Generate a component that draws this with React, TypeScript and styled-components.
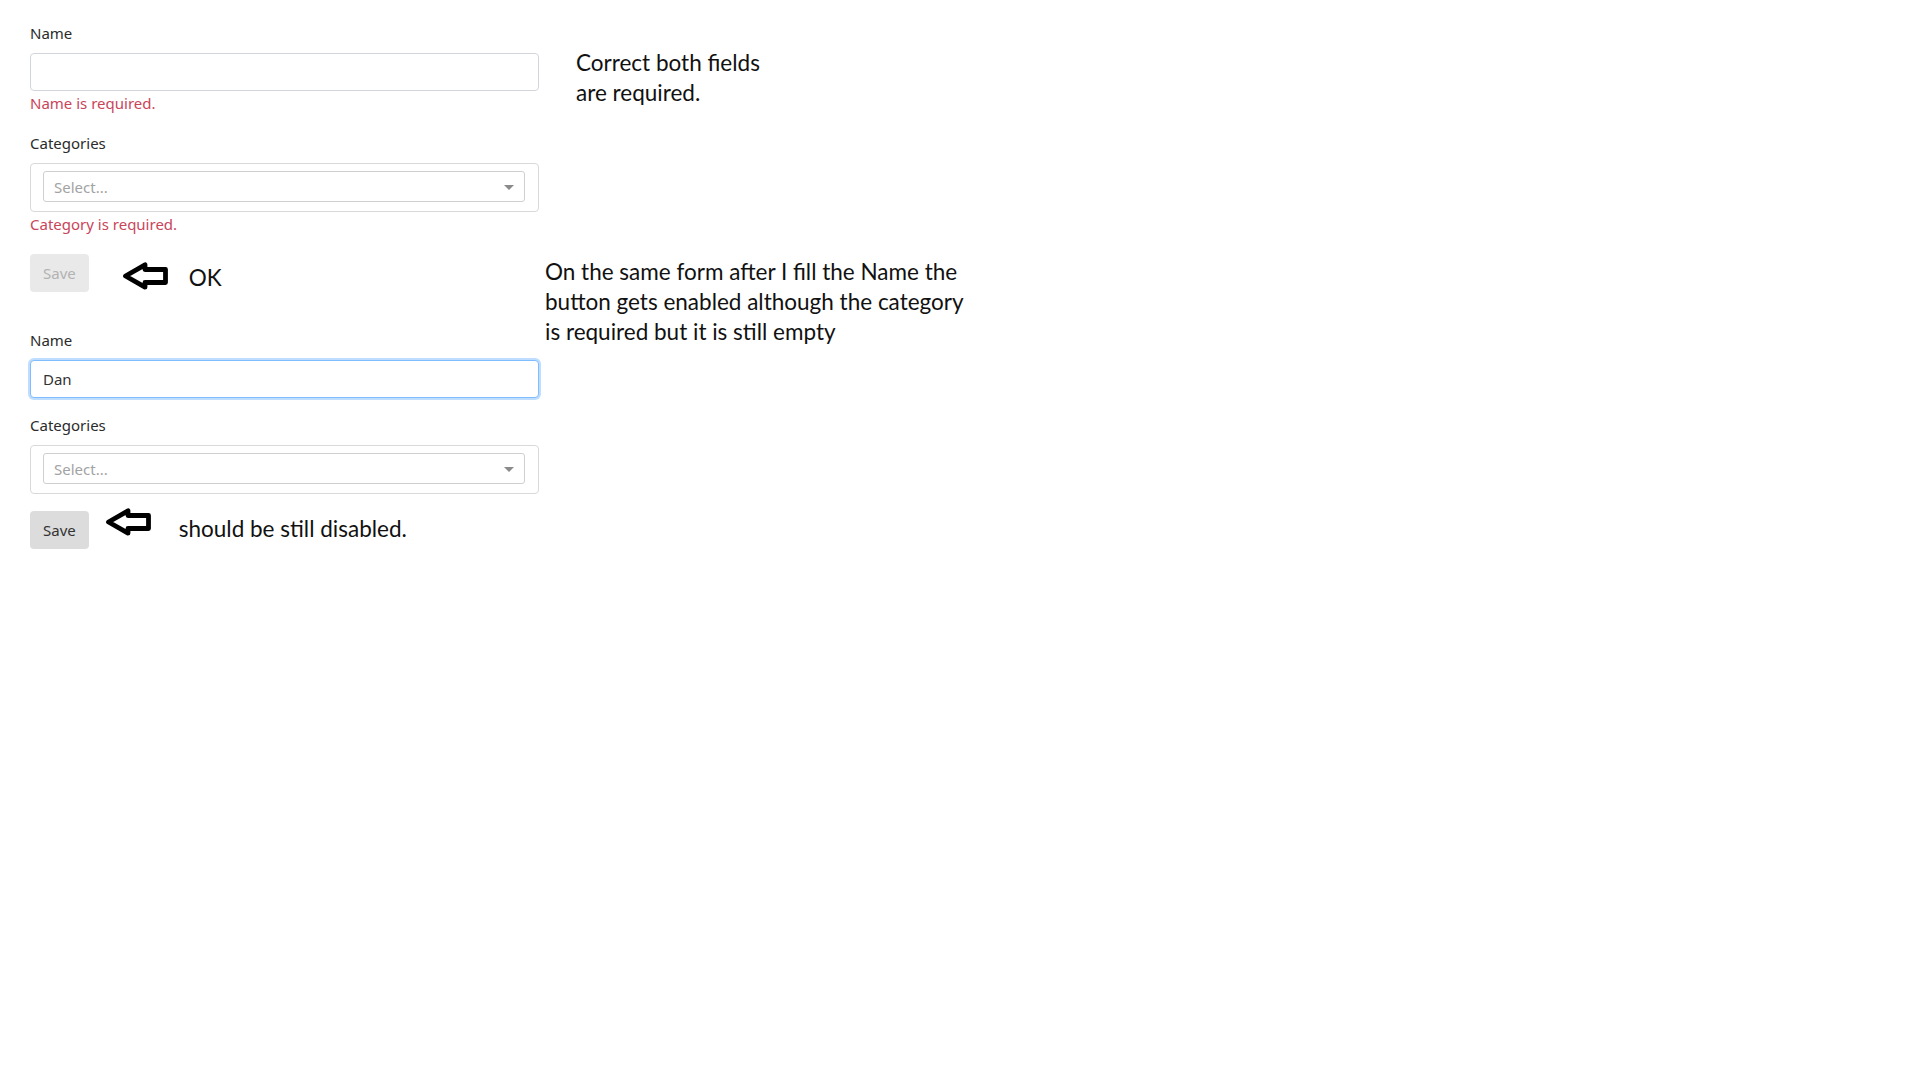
import styled, { createGlobalStyle } from "styled-components";

const GlobalStyle = createGlobalStyle`
  html, body {
    margin: 0;
    padding: 0;
    background: #ffffff;
  }
  body {
    font-family: "Noto Sans", "Open Sans", sans-serif;
    color: #212529;
  }
  * {
    box-sizing: border-box;
  }
`;

const Page = styled.div`
  width: 1920px;
  height: 1080px;
  padding: 21px 0 0 30px;
  display: grid;
  grid-template-columns: 509px auto;
  column-gap: 6px;
  align-items: start;
`;

const FormColumn = styled.div`
  display: flex;
  flex-direction: column;
`;

const Form = styled.form<{ $top?: number }>`
  display: flex;
  flex-direction: column;
  margin-top: ${(p) => p.$top ?? 0}px;
`;

const Group = styled.div<{ $space?: number }>`
  display: flex;
  flex-direction: column;
  margin-bottom: ${(p) => p.$space ?? 16}px;
`;

const Label = styled.label`
  font-size: 15px;
  line-height: 24px;
  margin-bottom: 8px;
  color: #2b2b2b;
`;

const TextInput = styled.input<{ $focused?: boolean }>`
  height: 38px;
  width: 100%;
  padding: 0 12px;
  font-family: "Noto Sans", "Open Sans", sans-serif;
  font-size: 15px;
  color: #333;
  background: #fff;
  border: 1px solid ${(p) => (p.$focused ? "#80bdff" : "#d2d6da")};
  border-radius: 4px;
  outline: none;
  box-shadow: ${(p) =>
    p.$focused ? "0 0 0 2px rgba(0, 123, 255, 0.25)" : "none"};
`;

const Error = styled.div`
  margin: 2px 0 2px;
  font-size: 15px;
  line-height: 20px;
  color: #c9455a;
`;

const SelectFrame = styled.div`
  height: 49px;
  padding: 7px 13px 9px 12px;
  border: 1px solid #d9d9d9;
  border-radius: 4px;
  display: flex;
`;

const SelectBox = styled.div`
  flex: 1;
  display: flex;
  align-items: center;
  justify-content: space-between;
  padding: 0 10px 0 10px;
  border: 1px solid #cfcfcf;
  border-radius: 3px;
  font-size: 15px;
  color: #a3a3a3;
`;

const Caret = styled.span`
  width: 0;
  height: 0;
  border-left: 5px solid transparent;
  border-right: 5px solid transparent;
  border-top: 5px solid #8a8a8a;
  margin-top: 2px;
`;

const ButtonRow = styled.div<{ $top?: number }>`
  display: flex;
  align-items: center;
  height: 38px;
  margin-top: ${(p) => p.$top ?? 0}px;
`;

const SaveButton = styled.button`
  height: 38px;
  padding: 0 13px;
  font-family: "Noto Sans", "Open Sans", sans-serif;
  font-size: 15px;
  border: none;
  border-radius: 4px;
  background: #dcdcdc;
  color: #333;

  &:disabled {
    background: #e9e9e9;
    color: #b2b2b2;
  }
`;

const ArrowMark = styled.svg<{ $gap: number; $shift: number }>`
  width: 46px;
  height: 28px;
  margin-left: ${(p) => p.$gap}px;
  transform: translateY(${(p) => p.$shift}px);
  flex-shrink: 0;
`;

const Remark = styled.span<{ $gap: number; $shift: number }>`
  margin-left: ${(p) => p.$gap}px;
  transform: translateY(${(p) => p.$shift}px);
  font-family: Lato, "Liberation Sans", sans-serif;
  font-size: 22.5px;
  line-height: 30px;
  color: #111;
  white-space: nowrap;
`;

const NoteColumn = styled.div`
  display: flex;
  flex-direction: column;
`;

const Note = styled.p<{ $top: number; $left?: number }>`
  margin: ${(p) => p.$top}px 0 0 ${(p) => p.$left ?? 0}px;
  font-family: Lato, "Liberation Sans", sans-serif;
  font-size: 22.5px;
  line-height: 30px;
  color: #111;
`;

const Arrow = ({ gap, shift }: { gap: number; shift: number }) => (
  <ArrowMark $gap={gap} $shift={shift} viewBox="0 0 46 28">
    <path
      d="M3.5 14 L23 2.8 L23 7.5 L43.5 7.5 L43.5 20.5 L23 20.5 L23 25.2 Z"
      fill="#fff"
      stroke="#000"
      strokeWidth="4.8"
      strokeLinejoin="round"
    />
  </ArrowMark>
);

const Select = () => (
  <SelectFrame>
    <SelectBox>
      <span>Select...</span>
      <Caret />
    </SelectBox>
  </SelectFrame>
);

const App = () => {
  return (
    <>
      <GlobalStyle />
      <Page>
        <FormColumn>
          <Form>
            <Group>
              <Label>Name</Label>
              <TextInput type="text" readOnly />
              <Error>Name is required.</Error>
            </Group>
            <Group>
              <Label>Categories</Label>
              <Select />
              <Error>Category is required.</Error>
            </Group>
            <ButtonRow $top={2}>
              <SaveButton type="button" disabled>
                Save
              </SaveButton>
              <Arrow gap={33} shift={3} />
              <Remark $gap={21} $shift={5}>
                OK
              </Remark>
            </ButtonRow>
          </Form>

          <Form $top={36}>
            <Group $space={15}>
              <Label>Name</Label>
              <TextInput type="text" value="Dan" readOnly $focused />
            </Group>
            <Group>
              <Label>Categories</Label>
              <Select />
            </Group>
            <ButtonRow $top={1}>
              <SaveButton type="button">Save</SaveButton>
              <Arrow gap={16} shift={-8} />
              <Remark $gap={28} $shift={-1}>
                should be still disabled.
              </Remark>
            </ButtonRow>
          </Form>
        </FormColumn>

        <NoteColumn>
          <Note $top={27} $left={31}>
            Correct both fields
            <br />
            are required.
          </Note>
          <Note $top={149}>
            On the same form after I fill the Name the
            <br />
            button gets enabled although the category
            <br />
            is required but it is still empty
          </Note>
        </NoteColumn>
      </Page>
    </>
  );
};

export default App;
